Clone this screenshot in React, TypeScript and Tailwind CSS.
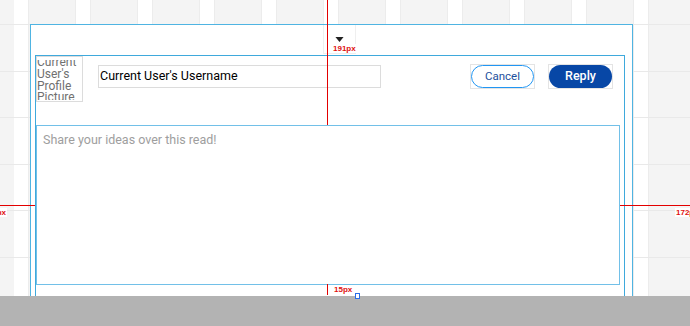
import { Fragment } from 'react';

const columns = Array.from({ length: 11 }, (_, i) => i);
const rows = Array.from({ length: 7 }, (_, i) => i);

function Guide({ text, className }: { text: string; className: string }) {
  return (
    <span
      className={`absolute bg-white px-[1px] text-[8px] leading-[9px] font-bold text-[#e01010] font-['Liberation_Sans',sans-serif] ${className}`}
    >
      {text}
    </span>
  );
}

export default function App() {
  return (
    <div className="relative w-[690px] h-[326px] overflow-hidden flex flex-col font-[Roboto,sans-serif]">
      <div className="relative h-[296px] shrink-0 overflow-hidden bg-[#f4f4f4]">
        {/* canvas grid */}
        <div className="absolute inset-0 flex">
          <div className="w-[14px] shrink-0" />
          {columns.map((i) => (
            <Fragment key={i}>
              <div className="w-[14px] shrink-0 bg-white" />
              <div className="w-[48px] shrink-0 border-x border-[#ececec]" />
            </Fragment>
          ))}
        </div>
        <div className="absolute inset-0 flex flex-col pt-[24px]">
          {rows.map((i) => (
            <div key={i} className="h-[46.6px] shrink-0 border-t border-[#e9e9e9]" />
          ))}
        </div>

        {/* frame */}
        <div className="absolute left-[30px] top-[24px] w-[603px] h-[290px] border border-[#4fb4e2] bg-white flex flex-col">
          <div className="h-[30px] shrink-0 pl-[292px]">
            <div className="w-[33px] h-[29px] border-x border-b border-[#efefef] flex flex-col items-start pl-[9px] pt-[12px]">
              <svg width="13" height="8" viewBox="0 0 13 8">
                <polygon points="0,0 13,0 6.5,8" fill="#222" />
              </svg>
              <span className="mt-[2px] bg-white text-[8px] leading-[9px] font-bold text-[#e01010] font-['Liberation_Sans',sans-serif]">
                191px
              </span>
            </div>
          </div>

          <div className="ml-[4px] w-[590px] h-[245px] border border-[#3fa9dc] flex flex-col">
            <div className="flex items-start pr-[11px]">
              <div className="w-[47px] h-[46px] shrink-0 border border-[#dcdcdc] pt-[3px]">
                <div className="h-[40px] overflow-hidden">
                  <div className="-mt-[3px] text-[12px] leading-[11.8px] text-[#707070]">
                    Current
                    <br />
                    User's
                    <br />
                    Profile
                    <br />
                    Picture
                  </div>
                </div>
              </div>
              <div className="ml-[15px] mt-[9px] w-[283px] h-[23px] border border-[#dcdcdc] flex items-center pl-[1px] text-[12.5px] text-black">
                Current User's Username
              </div>
              <div className="ml-auto mt-[8px] flex gap-[13px]">
                <div className="w-[65px] h-[25px] border border-[#e4e4e4]">
                  <button className="w-full h-full rounded-full border-[1.5px] border-[#2196f3] text-[11.5px] text-[#1d4f9c] flex items-center justify-center">
                    Cancel
                  </button>
                </div>
                <div className="w-[65px] h-[25px] border border-[#e4e4e4]">
                  <button className="w-full h-full rounded-full bg-[#0747a6] text-[12.5px] font-medium text-white flex items-center justify-center">
                    Reply
                  </button>
                </div>
              </div>
            </div>
            <textarea
              className="mt-[23px] w-[584px] h-[160px] shrink-0 resize-none border border-[#72c0e8] px-[6px] pt-[6px] text-[12.5px] leading-[15px] outline-none placeholder:text-[#9e9e9e]"
              placeholder="Share your ideas over this read!"
            />
          </div>
        </div>
      </div>

      <div className="h-[30px] shrink-0 bg-[#b3b3b3]" />

      {/* measurement guides */}
      <div className="absolute left-[327px] top-0 w-px h-[125px] bg-[#e30000]" />
      <div className="absolute left-0 top-[205px] w-[35px] h-px bg-[#e30000]" />
      <Guide text="172px" className="right-[683px] top-[208px]" />
      <div className="absolute left-[620px] top-[205px] w-[70px] h-px bg-[#e30000]" />
      <Guide text="172px" className="left-[675px] top-[208px]" />
      <div className="absolute left-[327px] top-[284px] w-px h-[11px] bg-[#e30000]" />
      <Guide text="15px" className="left-[333px] top-[285px]" />
      <div className="absolute left-[355px] top-[293px] w-[5px] h-[6px] border border-[#2a6ee8] bg-white" />
    </div>
  );
}
